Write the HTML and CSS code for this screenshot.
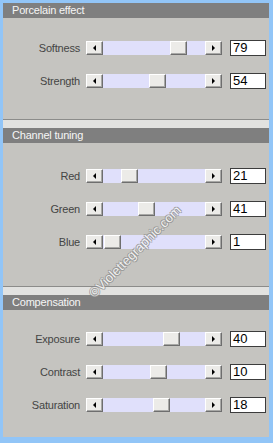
FILE: index.html
```html
<!DOCTYPE html>
<html lang="en">
<head>
    <meta charset="UTF-8">
    <meta name="viewport" content="width=device-width, initial-scale=1.0">
    <title>Porcelain effect</title>
    <link rel="stylesheet" href="styles.css">
</head>
<body>
    <div class="frame">
        <div class="panel">
            <div class="section first">
                <div class="header">Porcelain effect</div>
                <div class="rows rows-1">
                    <div class="row">
                        <span class="label">Softness</span>
                        <div class="slider">
                            <span class="btn left"><i></i></span>
                            <span class="track"><span class="thumb" style="--pos: 0.79"></span></span>
                            <span class="btn right"><i></i></span>
                        </div>
                        <span class="value">79</span>
                    </div>
                    <div class="row">
                        <span class="label">Strength</span>
                        <div class="slider">
                            <span class="btn left"><i></i></span>
                            <span class="track"><span class="thumb" style="--pos: 0.54"></span></span>
                            <span class="btn right"><i></i></span>
                        </div>
                        <span class="value">54</span>
                    </div>
                </div>
            </div>

            <div class="section">
                <div class="header">Channel tuning</div>
                <div class="rows rows-2">
                    <div class="row">
                        <span class="label">Red</span>
                        <div class="slider">
                            <span class="btn left"><i></i></span>
                            <span class="track"><span class="thumb" style="--pos: 0.21"></span></span>
                            <span class="btn right"><i></i></span>
                        </div>
                        <span class="value">21</span>
                    </div>
                    <div class="row">
                        <span class="label">Green</span>
                        <div class="slider">
                            <span class="btn left"><i></i></span>
                            <span class="track"><span class="thumb" style="--pos: 0.41"></span></span>
                            <span class="btn right"><i></i></span>
                        </div>
                        <span class="value">41</span>
                    </div>
                    <div class="row">
                        <span class="label">Blue</span>
                        <div class="slider">
                            <span class="btn left"><i></i></span>
                            <span class="track"><span class="thumb" style="--pos: 0.01"></span></span>
                            <span class="btn right"><i></i></span>
                        </div>
                        <span class="value">1</span>
                    </div>
                </div>
            </div>

            <div class="section">
                <div class="header">Compensation</div>
                <div class="rows rows-3">
                    <div class="row">
                        <span class="label">Exposure</span>
                        <div class="slider">
                            <span class="btn left"><i></i></span>
                            <span class="track"><span class="thumb" style="--pos: 0.70"></span></span>
                            <span class="btn right"><i></i></span>
                        </div>
                        <span class="value">40</span>
                    </div>
                    <div class="row">
                        <span class="label">Contrast</span>
                        <div class="slider">
                            <span class="btn left"><i></i></span>
                            <span class="track"><span class="thumb" style="--pos: 0.55"></span></span>
                            <span class="btn right"><i></i></span>
                        </div>
                        <span class="value">10</span>
                    </div>
                    <div class="row">
                        <span class="label">Saturation</span>
                        <div class="slider">
                            <span class="btn left"><i></i></span>
                            <span class="track"><span class="thumb" style="--pos: 0.59"></span></span>
                            <span class="btn right"><i></i></span>
                        </div>
                        <span class="value">18</span>
                    </div>
                </div>
            </div>
        </div>

        <!-- watermark over the panel -->
        <span class="watermark">&copy;Violettegraphic.com</span>
    </div>
</body>
</html>
```

FILE: styles.css
```css
body {
    margin: 0;
    font-family: "Liberation Sans", Arial, sans-serif;
    background-color: #92c5f7;
}
.frame {
    position: relative;
    width: 273px;
    height: 443px;
    box-sizing: border-box;
    padding: 3px 4px 6px 3px;
    background-color: #92c5f7;
}
.panel {
    height: 100%;
    background-color: #c5c4c0;
}
.section {
    border-top: 1px solid #8c8c8a;
    padding-top: 8px;
    background: linear-gradient(#e2e2e0 8px, transparent 8px);
}
.section.first {
    border-top: none;
    padding-top: 0;
    background: none;
}
.header {
    height: 15px;
    line-height: 15px;
    padding-left: 9px;
    background-color: #7f7f7f;
    color: #f6f6f6;
    font-size: 11px;
    letter-spacing: -0.2px;
}
.rows {
    display: flex;
    flex-direction: column;
    gap: 17px;
}
.rows-1 {
    padding: 22px 0 30px;
}
.rows-2 {
    padding: 25px 0 36px;
}
.rows-3 {
    padding: 21px 0 0;
}
.row {
    display: flex;
    align-items: center;
    height: 16px;
}
.label {
    width: 77px;
    margin-right: 6px;
    text-align: right;
    font-size: 11px;
    letter-spacing: -0.2px;
    color: #444;
}
.slider {
    display: flex;
    width: 136px;
    height: 14px;
}
.btn,
.thumb {
    box-sizing: border-box;
    width: 17px;
    height: 14px;
    background-color: #ecebe8;
    border-top: 1px solid #ffffff;
    border-left: 1px solid #ffffff;
    border-right: 1px solid #6e6e6e;
    border-bottom: 1px solid #6e6e6e;
    box-shadow: inset -1px -1px 0 #a8a8a6;
}
.btn {
    display: flex;
    align-items: center;
    justify-content: center;
}
.btn i {
    width: 0;
    height: 0;
    border-top: 3px solid transparent;
    border-bottom: 3px solid transparent;
}
.btn.left i {
    border-right: 3px solid #000;
}
.btn.right i {
    border-left: 3px solid #000;
}
.track {
    position: relative;
    flex: 1;
    background-color: #e0e0fb;
}
.thumb {
    position: absolute;
    top: 0;
    left: calc((100% - 17px) * var(--pos));
}
.value {
    box-sizing: border-box;
    width: 36px;
    height: 16px;
    margin-left: 8px;
    padding-left: 2px;
    background-color: #fff;
    border: 1px solid #3c3c3c;
    font-size: 13px;
    line-height: 14px;
    color: #000;
}
.watermark {
    position: absolute;
    left: 66px;
    top: 244px;
    width: 138px;
    text-align: center;
    font-size: 13px;
    color: #fafafa;
    text-shadow: 1px 0 0 #8a8a8a, -1px 0 0 #8a8a8a, 0 1px 0 #8a8a8a, 0 -1px 0 #8a8a8a;
    opacity: 0.8;
    transform: rotate(-45deg);
    white-space: nowrap;
}
```
